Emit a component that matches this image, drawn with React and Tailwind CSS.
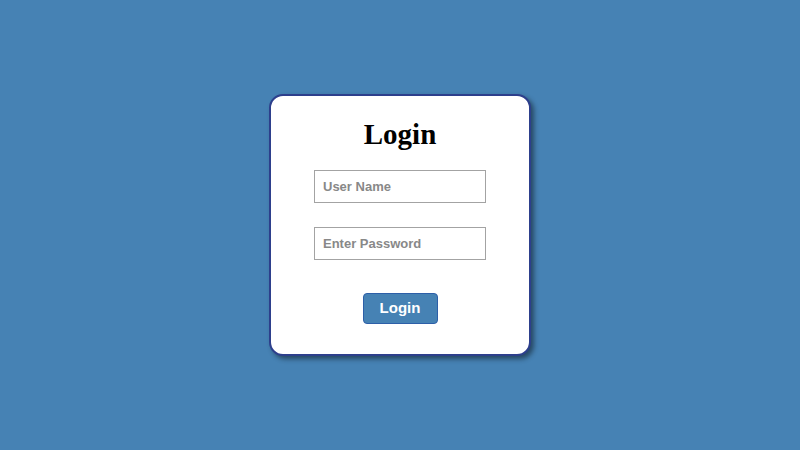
import React, { useState } from 'react'

export default function App() {
    const [user, setUser] = useState('')
    const [pass, setPass] = useState('')

    return (
        <div className="w-full h-[450px] bg-[#4682b4] flex items-center justify-center">
            <form
                onSubmit={(e) => e.preventDefault()}
                className="w-[262px] h-[262px] bg-white border-2 border-[#2d3f8c] rounded-[14px] shadow-[3px_3px_5px_rgba(0,0,0,0.45)] flex flex-col items-center pt-[20px]"
            >
                <h1 className="text-[29px] leading-[37px] font-bold text-black font-['Liberation_Serif',serif]">Login</h1>
                <input
                    type="text"
                    placeholder="User Name"
                    value={user}
                    onChange={(e) => setUser(e.target.value)}
                    className="mt-[17px] w-[172px] h-[33px] border border-[#a3a3a3] px-[8px] text-[13px] font-bold font-['Liberation_Sans',sans-serif] placeholder:text-[#888888] outline-none"
                />
                <input
                    type="password"
                    placeholder="Enter Password"
                    value={pass}
                    onChange={(e) => setPass(e.target.value)}
                    className="mt-[24px] w-[172px] h-[33px] border border-[#a3a3a3] px-[8px] text-[13px] font-bold font-['Liberation_Sans',sans-serif] placeholder:text-[#888888] outline-none"
                />
                <button
                    type="submit"
                    className="mt-[33px] w-[75px] h-[31px] bg-[#4682b4] border border-[#2d5fa8] rounded-[4px] text-white text-[15px] font-bold font-['Liberation_Sans',sans-serif]"
                >
                    Login
                </button>
            </form>
        </div>
    )
}
